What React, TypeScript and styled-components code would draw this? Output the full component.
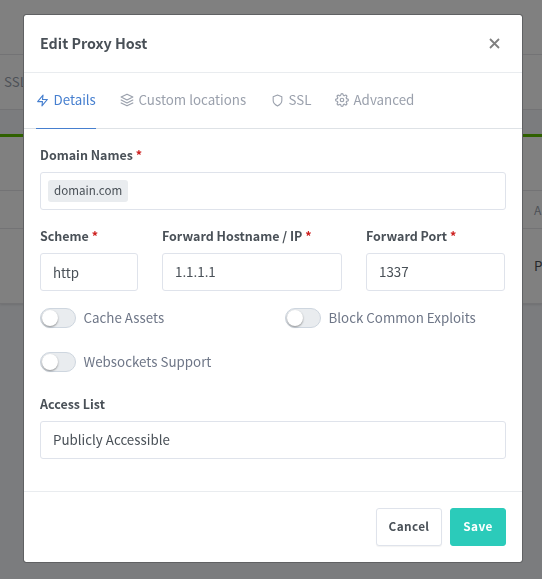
import React from "react";
import styled, { createGlobalStyle } from "styled-components";
import { FiZap, FiLayers, FiShield, FiSettings } from "react-icons/fi";

const GlobalStyle = createGlobalStyle`
  * { box-sizing: border-box; }
  body {
    margin: 0;
    overflow: hidden;
    background: #7b7c7e;
    color: #495057;
    font-family: "Noto Sans CJK SC", "Noto Sans", sans-serif;
    font-size: 13.35px;
    line-height: 20px;
  }
`;

const Page = styled.div`
  height: 579px;
  overflow: hidden;
`;

const Strip = styled.div<{ $height: number; $end?: boolean }>`
  height: ${(p) => p.$height}px;
  display: flex;
  align-items: center;
  padding-left: ${(p) => (p.$end ? 534 : 4)}px;
  background: #808080;
  border-bottom: 1px solid #737375;
  color: #4d5157;
  white-space: nowrap;
`;

const PageGap = styled.div`
  height: 24px;
  background: #7b7c7e;
`;

const Card = styled.div`
  border-top: 3px solid #2f6000;
  box-shadow: 0 1px 2px rgba(0, 0, 0, 0.1);
`;

const ColumnHead = styled.span`
  font-size: 12px;
  color: #4d5157;
`;

const CellText = styled.span`
  color: #25282c;
`;

const Overlay = styled.div`
  position: fixed;
  inset: 0;
  padding: 14px 19px 0 23px;
`;

const Dialog = styled.section`
  width: 500px;
  height: 549px;
  background: #fff;
  background-clip: padding-box;
  border: 1px solid #606163;
  border-radius: 3px;
  display: flex;
  flex-direction: column;
`;

const Header = styled.header`
  height: 58px;
  flex: none;
  display: flex;
  align-items: center;
  justify-content: space-between;
  padding: 0 22px 0 16px;
  border-bottom: 1px solid #e9ecef;
`;

const Title = styled.h5`
  margin: 0 0 2px;
  font-size: 14.3px;
  font-weight: 700;
`;

const Close = styled.button`
  display: flex;
  padding: 0;
  border: 0;
  background: none;
  color: #808080;
`;

const Tabs = styled.nav`
  height: 56px;
  flex: none;
  display: flex;
  gap: 24px;
  padding: 0 12px;
  border-bottom: 1px solid #dee2e6;
`;

const Tab = styled.a<{ $active?: boolean; $width: number }>`
  width: ${(p) => p.$width}px;
  height: 56px;
  display: flex;
  align-items: center;
  gap: 4.5px;
  padding-bottom: 1px;
  white-space: nowrap;
  color: ${(p) => (p.$active ? "#467fcf" : "#9aa0ac")};
  border-bottom: 1px solid ${(p) => (p.$active ? "#467fcf" : "transparent")};
  svg { flex: none; }
`;

const Form = styled.form`
  height: 363px;
  flex: none;
  padding: 16px 16px 0;
  border-bottom: 1px solid #e9ecef;
`;

const Fields = styled.div`
  display: grid;
  grid-template-columns: 98px 180px 139px;
  column-gap: 24px;
`;

const Field = styled.div<{ $space: number }>`
  margin-bottom: ${(p) => p.$space}px;
`;

const Label = styled.label`
  display: block;
  height: 27px;
  font-size: 12.47px;
  font-weight: 700;
  line-height: 21px;
  white-space: nowrap;
`;

const Required = styled.span`
  color: #cd201f;
`;

const Control = styled.div<{ $tags?: boolean; $drop?: number }>`
  height: 38px;
  display: flex;
  align-items: center;
  padding: ${(p) => p.$drop ?? 0}px ${(p) => (p.$tags ? 7 : 12)}px 0;
  border: 1px solid #dfe3eb;
  border-radius: 3px;
`;

const Tag = styled.span`
  height: 22px;
  padding: 0 6px;
  border-radius: 3px;
  background: #e9ecef;
  font-size: 11.6px;
  line-height: 20px;
`;

const Switches = styled.div`
  display: grid;
  grid-template-columns: 245px 1fr;
  row-gap: 24px;
  padding-top: 1px;
  margin-bottom: 22px;
`;

const Switch = styled.label`
  height: 20px;
  display: flex;
  align-items: center;
  gap: 7.5px;
  color: #6e7687;
`;

const Track = styled.span`
  width: 36px;
  height: 20px;
  padding: 1px;
  border: 1px solid #ced6df;
  border-radius: 10px;
  background: #e9ecef;
`;

const Knob = styled.span`
  display: block;
  width: 16px;
  height: 16px;
  border-radius: 50%;
  background: #fff;
  box-shadow: 0 1px 2px rgba(0, 0, 0, 0.4);
`;

const Footer = styled.footer`
  display: flex;
  justify-content: flex-end;
  gap: 8px;
  padding: 16px 16px 0;
`;

const Button = styled.button<{ $primary?: boolean }>`
  width: ${(p) => (p.$primary ? 56 : 66)}px;
  height: 38px;
  padding: 0 0 2px;
  border: 1px solid ${(p) => (p.$primary ? "#2bcbba" : "#dfe3eb")};
  border-radius: 3px;
  background: ${(p) => (p.$primary ? "#2bcbba" : "#fff")};
  color: ${(p) => (p.$primary ? "#fff" : "#495057")};
  box-shadow: ${(p) => (p.$primary ? "none" : "0 1px 1px rgba(0, 0, 0, 0.05)")};
  font: 700 11.8px/20px "Noto Sans CJK SC", "Noto Sans", sans-serif;
  letter-spacing: 0.35px;
`;

function RequiredMark() {
  return <Required>*</Required>;
}

function Toggle({ text }: { text: string }) {
  return (
    <Switch>
      <Track><Knob /></Track>
      <span>{text}</span>
    </Switch>
  );
}

export default function App() {
  return (
    <>
      <GlobalStyle />
      <Page>
        <Strip $height={55} />
        <Strip $height={55}>SSL</Strip>
        <PageGap />
        <Card>
          <Strip $height={54} />
          <Strip $height={38} $end><ColumnHead>A</ColumnHead></Strip>
          <Strip $height={75} $end><CellText>P</CellText></Strip>
        </Card>
      </Page>
      <Overlay>
        <Dialog role="dialog" aria-label="Edit Proxy Host">
          <Header>
            <Title>Edit Proxy Host</Title>
            <Close type="button" aria-label="Close">
              <svg width="11" height="11" viewBox="0 0 11 11" fill="none" stroke="currentColor" strokeWidth="1.8">
                <path d="M1 1l9 9M10 1L1 10" />
              </svg>
            </Close>
          </Header>
          <Tabs>
            <Tab $active $width={60}><FiZap size={13} />Details</Tab>
            <Tab $width={127}><FiLayers size={14} />Custom locations</Tab>
            <Tab $width={40}><FiShield size={13} />SSL</Tab>
            <Tab $width={80}><FiSettings size={14} />Advanced</Tab>
          </Tabs>
          <Form>
            <Field $space={16}>
              <Label>Domain Names <RequiredMark /></Label>
              <Control $tags><Tag>domain.com</Tag></Control>
            </Field>
            <Fields>
              <Field $space={16}>
                <Label>Scheme <RequiredMark /></Label>
                <Control $drop={2}>http</Control>
              </Field>
              <Field $space={16}>
                <Label>Forward Hostname / IP <RequiredMark /></Label>
                <Control>1.1.1.1</Control>
              </Field>
              <Field $space={16}>
                <Label>Forward Port <RequiredMark /></Label>
                <Control>1337</Control>
              </Field>
            </Fields>
            <Switches>
              <Toggle text="Cache Assets" />
              <Toggle text="Block Common Exploits" />
              <Toggle text="Websockets Support" />
            </Switches>
            <Field $space={0}>
              <Label>Access List</Label>
              <Control>Publicly Accessible</Control>
            </Field>
          </Form>
          <Footer>
            <Button type="button">Cancel</Button>
            <Button type="button" $primary>Save</Button>
          </Footer>
        </Dialog>
      </Overlay>
    </>
  );
}
